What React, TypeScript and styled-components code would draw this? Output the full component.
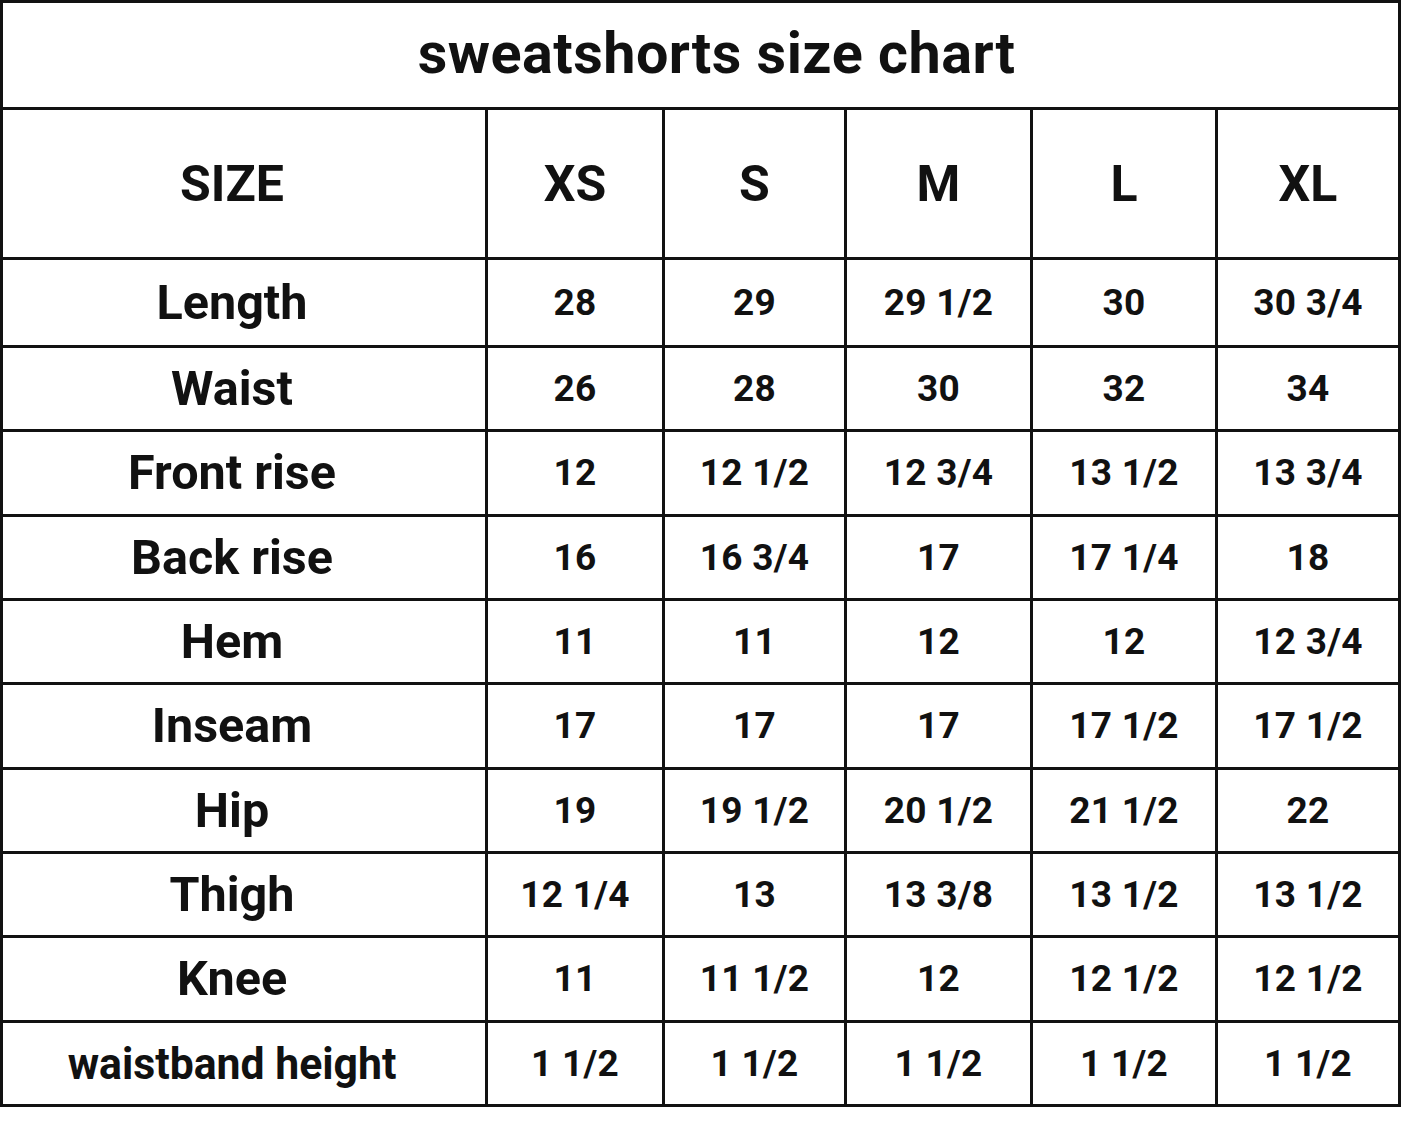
import React from "react";
import styled, { createGlobalStyle } from "styled-components";

const GlobalStyle = createGlobalStyle`
  html, body {
    margin: 0;
    padding: 0;
    background: #ffffff;
  }
  body {
    font-family: Roboto, "Noto Sans", "Liberation Sans", sans-serif;
    color: #111111;
  }
`;

const Page = styled.div`
  width: 1402px;
  height: 1122px;
  background: #ffffff;
`;

const Chart = styled.div`
  width: 1401px;
  box-sizing: border-box;
  border: 3px solid #111111;
  background: #111111;
  display: grid;
  grid-template-columns: 482px 174px 179px 183px 182px 180px;
  grid-template-rows: 104px 147px 85px repeat(9, 81.33px);
  gap: 3px;
`;

const Title = styled.div`
  grid-column: 1 / -1;
  background: #ffffff;
  display: flex;
  align-items: center;
  justify-content: center;
  font-size: 57.5px;
  font-weight: 700;
  letter-spacing: 0.5px;
  padding-left: 32px;
  padding-bottom: 4px;
`;

const Cell = styled.div<{ $kind: "head" | "label" | "value"; $first?: boolean }>`
  background: #ffffff;
  display: flex;
  align-items: center;
  justify-content: center;
  font-weight: 700;
  white-space: nowrap;
  box-sizing: border-box;
  padding-right: ${(p) => (p.$first ? "24px" : "0")};
  font-size: ${(p) =>
    p.$kind === "head" ? "50px" : p.$kind === "label" ? "48.5px" : "37px"};
  letter-spacing: ${(p) => (p.$kind === "value" ? "0.3px" : "0")};
`;

const Label = styled.span<{ $narrow?: boolean }>`
  display: inline-block;
  ${(p) => (p.$narrow ? "font-size: 45px; transform: scaleX(0.95);" : "")}
`;

const sizes = ["XS", "S", "M", "L", "XL"];

const rows: { label: string; values: string[] }[] = [
  { label: "Length", values: ["28", "29", "29 1/2", "30", "30 3/4"] },
  { label: "Waist", values: ["26", "28", "30", "32", "34"] },
  { label: "Front rise", values: ["12", "12 1/2", "12 3/4", "13 1/2", "13 3/4"] },
  { label: "Back rise", values: ["16", "16 3/4", "17", "17 1/4", "18"] },
  { label: "Hem", values: ["11", "11", "12", "12", "12 3/4"] },
  { label: "Inseam", values: ["17", "17", "17", "17 1/2", "17 1/2"] },
  { label: "Hip", values: ["19", "19 1/2", "20 1/2", "21 1/2", "22"] },
  { label: "Thigh", values: ["12 1/4", "13", "13 3/8", "13 1/2", "13 1/2"] },
  { label: "Knee", values: ["11", "11 1/2", "12", "12 1/2", "12 1/2"] },
  { label: "waistband height", values: ["1 1/2", "1 1/2", "1 1/2", "1 1/2", "1 1/2"] },
];

export default function App() {
  return (
    <Page>
      <GlobalStyle />
      <Chart>
        <Title>sweatshorts size chart</Title>
        <Cell $kind="head" $first>
          SIZE
        </Cell>
        {sizes.map((s) => (
          <Cell key={s} $kind="head">
            {s}
          </Cell>
        ))}
        {rows.map((r) => (
          <React.Fragment key={r.label}>
            <Cell $kind="label" $first>
              <Label $narrow={r.label === "waistband height"}>{r.label}</Label>
            </Cell>
            {r.values.map((v, i) => (
              <Cell key={i} $kind="value">
                {v}
              </Cell>
            ))}
          </React.Fragment>
        ))}
      </Chart>
    </Page>
  );
}
